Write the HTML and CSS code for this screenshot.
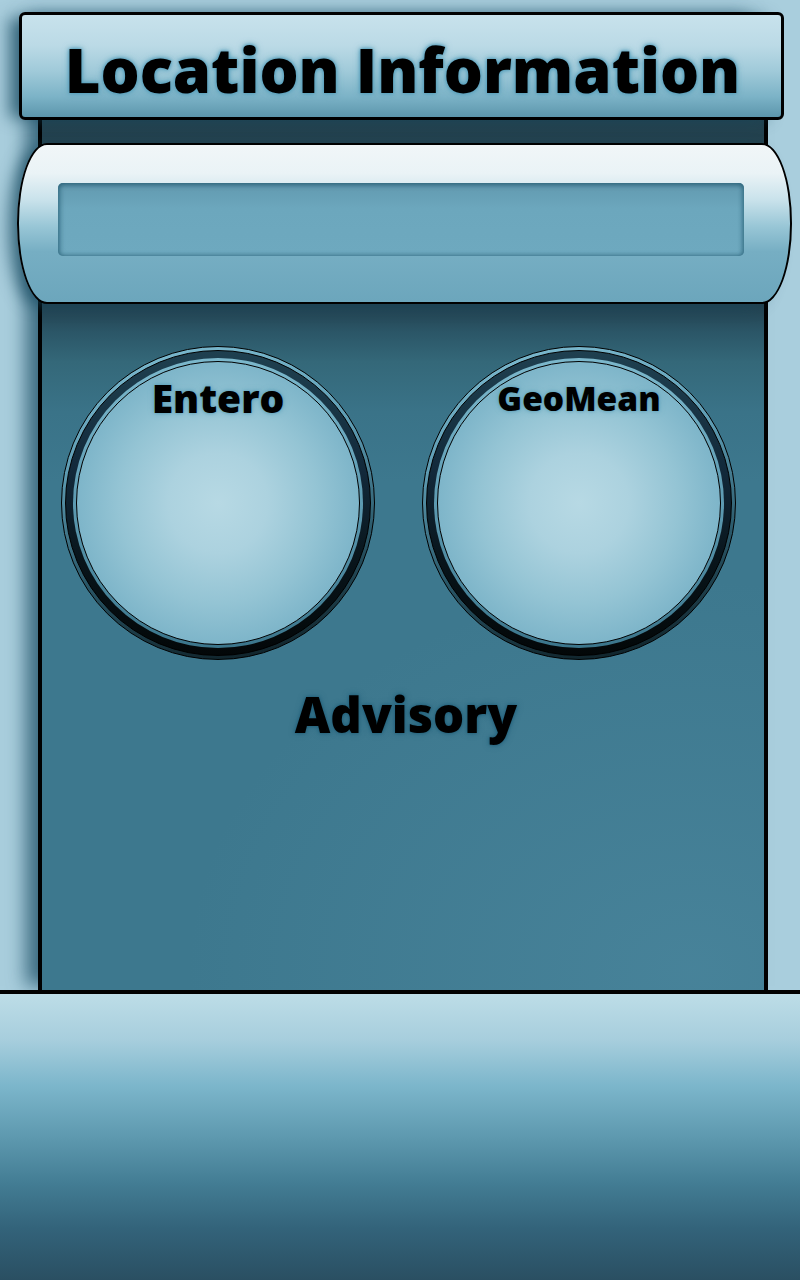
FILE: index.html
```html
<!DOCTYPE html>
<html lang="en">
<head>
<meta charset="utf-8">
<title>Location Information</title>
<link rel="stylesheet" href="styles.css">
</head>
<body>
<div class="page">
  <main class="panel">
    <header class="title-bar">
      <h1 class="title">Location Information</h1>
    </header>
    <div class="pill">
      <div class="pill-slot"></div>
    </div>
    <div class="dials">
      <div class="dial">
        <div class="dial-bezel">
          <div class="dial-lip">
            <div class="dial-face">
              <span class="dial-label">Entero</span>
            </div>
          </div>
        </div>
      </div>
      <div class="dial">
        <div class="dial-bezel">
          <div class="dial-lip">
            <div class="dial-face">
              <span class="dial-label dial-label-small">GeoMean</span>
            </div>
          </div>
        </div>
      </div>
    </div>
    <div class="advisory">Advisory</div>
  </main>
  <footer class="footer"></footer>
</div>
</body>
</html>
```

FILE: styles.css
```css
html, body {
  margin: 0;
  padding: 0;
}

body {
  background: #a9cedd;
  font-family: "Open Sans", "Noto Sans", "DejaVu Sans", sans-serif;
  overflow: hidden;
}

.page {
  width: 800px;
  height: 1280px;
  box-sizing: border-box;
  padding-top: 12px;
  display: flex;
  flex-direction: column;
  background: #a9cedd;
}

.panel {
  flex: 0 0 auto;
  height: 978px;
  margin: 0 32px 0 38px;
  box-sizing: border-box;
  border-left: 4px solid #000;
  border-right: 4px solid #000;
  background:
    radial-gradient(ellipse 70% 40% at 90% 98%, rgba(86, 146, 170, 0.4), rgba(86, 146, 170, 0) 100%),
    linear-gradient(to bottom,
      #1e3844 0px,
      #24434f 40px,
      #22404e 292px,
      #2b5667 320px,
      #346879 350px,
      #3a7388 400px,
      #3d788e 470px,
      #3d788e 100%);
  box-shadow: -16px 0 18px -4px rgba(22, 72, 96, 0.75);
  display: flex;
  flex-direction: column;
}

.title-bar {
  flex: 0 0 auto;
  height: 108px;
  margin: 0 -20px 0 -23px;
  box-sizing: border-box;
  border: 3px solid #000;
  border-radius: 6px;
  background: linear-gradient(to bottom,
    #c8e2ec 0%,
    #bbdae6 30%,
    #a0cad9 55%,
    #7cb3c7 80%,
    #5c96ac 100%);
  box-shadow: -14px 2px 16px -4px rgba(22, 72, 96, 0.7);
  display: flex;
  align-items: center;
  justify-content: center;
  padding-top: 6px;
  padding-left: 2px;
}

.title {
  margin: 0;
  font-size: 61.5px;
  line-height: 80px;
  font-weight: 800;
  color: #000;
  text-shadow:
    0 0 3px rgba(80, 155, 185, 1),
    0 0 5px rgba(85, 158, 186, 0.9),
    0 0 7px rgba(95, 165, 192, 0.7);
  white-space: nowrap;
}

.pill {
  flex: 0 0 auto;
  height: 161px;
  margin: 23px -28px 0 -25px;
  box-sizing: border-box;
  border: 2px solid #000;
  border-radius: 30px / 80px;
  padding: 38px 46px 46px 39px;
  background: linear-gradient(to bottom,
    #f1f6f8 0%,
    #eaf3f6 18%,
    #c9e2eb 35%,
    #98c6d6 52%,
    #76aec3 68%,
    #6ca6bc 100%);
  box-shadow: -12px 4px 16px -4px rgba(22, 72, 96, 0.7);
}

.pill-slot {
  height: 73px;
  border-radius: 5px;
  background: linear-gradient(to bottom, #6199af 0%, #6ca7bd 35%, #6ea9bf 100%);
  box-shadow:
    inset 0 2px 5px rgba(40, 95, 118, 0.7),
    inset 2px 0 5px rgba(40, 95, 118, 0.5),
    inset -2px 0 4px rgba(40, 95, 118, 0.4);
}

.dials {
  flex: 0 0 auto;
  display: flex;
  gap: 47px;
  margin-top: 42px;
  padding-left: 19px;
}

.dial {
  width: 314px;
  height: 314px;
  box-sizing: border-box;
  border-radius: 50%;
  border: 1px solid #000;
  padding: 3px;
  background: linear-gradient(170deg, #7fbcd1 0%, #5d9bb2 35%, #2a5869 65%, #0b191e 100%);
}

.dial-bezel {
  height: 100%;
  box-sizing: border-box;
  border-radius: 50%;
  border: 1px solid #000;
  padding: 7px;
  background: linear-gradient(to bottom, #1f4050 0%, #12293a 40%, #08141a 70%, #030708 100%);
}

.dial-lip {
  height: 100%;
  box-sizing: border-box;
  border-radius: 50%;
  padding: 3px;
  background: linear-gradient(to bottom, #7cb8cc 0%, #5d9bb2 50%, #3b758b 100%);
}

.dial-face {
  height: 100%;
  box-sizing: border-box;
  border-radius: 50%;
  border: 1px solid #000;
  background: radial-gradient(circle at 50% 50%,
    #b7d9e4 0%,
    #acd2df 25%,
    #94c4d4 50%,
    #79b2c7 75%,
    #68a3b9 100%);
  display: flex;
  flex-direction: column;
  align-items: center;
  padding-top: 16px;
}

.dial-label {
  font-size: 39px;
  line-height: 40px;
  font-weight: 800;
  color: #000;
  text-shadow:
    0 0 3px rgba(85, 155, 182, 1),
    0 0 6px rgba(95, 162, 188, 0.8);
  white-space: nowrap;
}

.dial-label-small {
  font-size: 33.5px;
}

.advisory {
  margin-top: 24px;
  padding-left: 6px;
  text-align: center;
  font-size: 49px;
  line-height: 60px;
  font-weight: 800;
  color: #000;
  text-shadow:
    0 0 3px rgba(30, 92, 118, 1),
    0 0 6px rgba(35, 98, 124, 0.85);
}

.footer {
  flex: 0 0 auto;
  height: 290px;
  box-sizing: border-box;
  border-top: 4px solid #000;
  background: linear-gradient(to bottom,
    #bddde7 0%,
    #a7cedd 16%,
    #7cb6cb 32%,
    #5e99af 50%,
    #437d94 66%,
    #33637a 82%,
    #2a4f62 100%);
}
```
